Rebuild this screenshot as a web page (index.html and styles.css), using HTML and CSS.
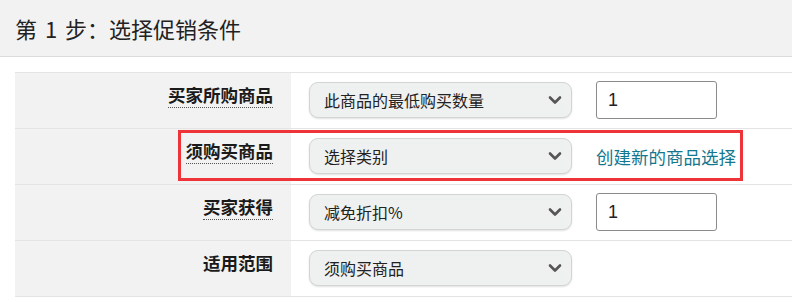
FILE: index.html
```html
<!DOCTYPE html>
<html lang="zh-CN">
<head>
<meta charset="utf-8">
<link rel="stylesheet" href="styles.css">
</head>
<body>
<div class="page">
  <div class="header"><h1 class="title">第 1 步：选择促销条件</h1></div>
  <div class="form">
    <div class="row">
      <div class="label"><span class="hint">买家所购商品</span></div>
      <div class="value">
        <div class="select"><span>此商品的最低购买数量</span><svg class="chev" viewBox="0 0 14 10" width="14" height="10"><path d="M2 2.5 L7 7.5 L12 2.5" fill="none" stroke="#555" stroke-width="2.6" stroke-linecap="round" stroke-linejoin="round"/></svg></div>
        <div class="input">1</div>
      </div>
    </div>
    <div class="row">
      <div class="label"><span class="hint">须购买商品</span></div>
      <div class="value">
        <div class="select"><span>选择类别</span><svg class="chev" viewBox="0 0 14 10" width="14" height="10"><path d="M2 2.5 L7 7.5 L12 2.5" fill="none" stroke="#555" stroke-width="2.6" stroke-linecap="round" stroke-linejoin="round"/></svg></div>
        <a class="link" href="#">创建新的商品选择</a>
      </div>
    </div>
    <div class="row">
      <div class="label"><span class="hint">买家获得</span></div>
      <div class="value">
        <div class="select"><span>减免折扣%</span><svg class="chev" viewBox="0 0 14 10" width="14" height="10"><path d="M2 2.5 L7 7.5 L12 2.5" fill="none" stroke="#555" stroke-width="2.6" stroke-linecap="round" stroke-linejoin="round"/></svg></div>
        <div class="input">1</div>
      </div>
    </div>
    <div class="row">
      <div class="label"><span>适用范围</span></div>
      <div class="value">
        <div class="select"><span>须购买商品</span><svg class="chev" viewBox="0 0 14 10" width="14" height="10"><path d="M2 2.5 L7 7.5 L12 2.5" fill="none" stroke="#555" stroke-width="2.6" stroke-linecap="round" stroke-linejoin="round"/></svg></div>
      </div>
    </div>
  </div>
  <div class="highlight"></div>
</div>
</body>
</html>
```
FILE: styles.css
```css
* { box-sizing: border-box; }
html, body { margin: 0; padding: 0; background: #fff; }
body {
  font-family: "Noto Sans CJK SC", "Liberation Sans", sans-serif;
  color: #222;
}
.page { position: relative; width: 792px; height: 302px; overflow: hidden; }
.header {
  height: 57px;
  background: #f2f2f2;
  border-bottom: 1px solid #dcdcdc;
  display: flex;
  align-items: center;
  padding-left: 15px;
}
.title {
  margin: 0;
  font-size: 22px;
  font-weight: 400;
  line-height: 1;
  color: #222;
  word-spacing: 3px;
  padding-bottom: 1px;
}
.form {
  margin-top: 15px;
  margin-left: 15px;
  border-bottom: 1px solid #e4e4e4;
}
.row {
  display: grid;
  grid-template-columns: 276px 1fr;
  height: 56px;
  border-top: 1px solid #e4e4e4;
}
.label {
  background: #f2f2f2;
  text-align: right;
  padding-right: 18px;
  padding-top: 9px;
  font-size: 17.5px;
  font-weight: 700;
  line-height: 26px;
  color: #1a1a1a;
}
.hint {
  border-bottom: 1px dotted #555;
}
.value {
  display: flex;
  align-items: center;
  padding-left: 18px;
  padding-bottom: 1px;
}
.select {
  width: 263px;
  height: 36px;
  background: #eff0f0;
  border: 1px solid #d3d5d5;
  border-radius: 9px;
  box-shadow: 0 1px 2px rgba(0,0,0,0.12);
  display: flex;
  align-items: center;
  justify-content: space-between;
  padding: 0 9px 0 14px;
  font-size: 16px;
  color: #222;
}
.chev { display: block; }
.input {
  margin-left: 24px;
  width: 121px;
  height: 38px;
  border: 1px solid #8a8a8a;
  border-radius: 3px;
  background: #fff;
  font-family: "Liberation Sans", sans-serif;
  font-size: 18px;
  display: flex;
  align-items: center;
  padding-left: 11px;
  color: #222;
}
.link {
  margin-left: 24px;
  font-size: 17.5px;
  color: #13778f;
  text-decoration: none;
}
.highlight {
  position: absolute;
  left: 178px;
  top: 130px;
  width: 565px;
  height: 51px;
  border: 3px solid #ee3439;
  pointer-events: none;
}
```
